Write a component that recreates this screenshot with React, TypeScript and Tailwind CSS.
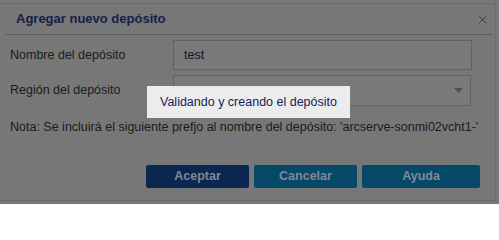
import React from 'react';

const App = () => {
  return (
    <div
      className="relative w-[499px] h-[204px] bg-[#777777] overflow-hidden"
      style={{ fontFamily: '"Liberation Sans", Arial, sans-serif' }}
    >
      <div className="mt-[3px] w-[496px] h-[198px] border-t border-r border-b border-[#6c6c6c] flex flex-col">
        {/* header */}
        <div className="h-[30px] flex items-center justify-between pl-[16px] pr-[7px]">
          <h1 className="text-[13px] font-bold text-[#16204a]">Agregar nuevo depósito</h1>
          <svg width="11" height="11" viewBox="0 0 11 11">
            <path d="M1.5 1.5 L9.5 9.5 M9.5 1.5 L1.5 9.5" stroke="#8a8a8a" strokeWidth="3" />
            <path d="M1.5 1.5 L9.5 9.5 M9.5 1.5 L1.5 9.5" stroke="#4a4a4a" strokeWidth="1.2" />
          </svg>
        </div>
        <div className="mx-[5px] h-px bg-[#5e5e5e] w-[488px]" />

        {/* rows */}
        <div className="flex items-center mt-[5px] h-[30px]">
          <span className="w-[173px] pl-[10px] text-[12.5px] text-[#1b1b1b]">Nombre del depósito</span>
          <div className="w-[299px] h-[30px] border border-[#626262] bg-[#7a7a7a] flex items-center pl-[10px] text-[12.5px] text-[#141424]">
            test
          </div>
        </div>
        <div className="flex items-center mt-[5px] h-[31px]">
          <span className="w-[173px] pl-[10px] text-[12.5px] text-[#1b1b1b]">Región del depósito</span>
          <div className="w-[298px] h-[31px] border border-[#626262] bg-[#7a7a7a] flex items-center justify-end pr-[7px]">
            <svg width="9" height="5" viewBox="0 0 9 5">
              <path d="M0 0 H9 L4.5 5 Z" fill="#4f4f4f" />
            </svg>
          </div>
        </div>

        <p className="mt-[13px] pl-[10px] text-[12.5px] text-[#1b1b1b] leading-[16px] whitespace-nowrap">
          Nota: Se incluirá el siguiente prefjo al nombre del depósito: 'arcserve-sonmi02vcht1-'
        </p>

        {/* buttons */}
        <div className="mt-[30px] flex pl-[146px] gap-[5px]">
          <button className="w-[103px] h-[23px] rounded-[2px] bg-[#0a2751] text-[12.5px] font-bold text-[#808a94]">
            Aceptar
          </button>
          <button className="w-[103px] h-[23px] rounded-[2px] bg-[#054867] text-[12.5px] font-bold text-[#808a94]">
            Cancelar
          </button>
          <button className="w-[118px] h-[23px] rounded-[2px] bg-[#054867] text-[12.5px] font-bold text-[#808a94]">
            Ayuda
          </button>
        </div>
      </div>

      {/* progress popup */}
      <div className="absolute left-[147px] top-[86px] w-[203px] h-[32px] bg-[#ececec] flex items-center pl-[13px] text-[12.5px] text-[#1a1a5c]">
        Validando y creando el depósito
      </div>
    </div>
  );
};

export default App;
